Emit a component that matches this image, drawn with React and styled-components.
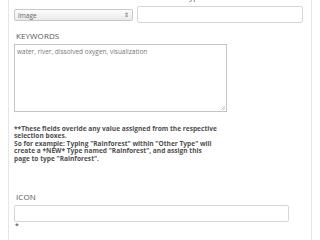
import React from 'react';
import styled, { createGlobalStyle } from 'styled-components';

const Global = createGlobalStyle`
  html, body {
    margin: 0;
    padding: 0;
    background: #fff;
    overflow: hidden;
  }
  body {
    font-family: "Open Sans", "DejaVu Sans", sans-serif;
  }
`;

const Panel = styled.div`
  margin: -8px 8px 0 8px;
  height: 260px;
  border-left: 1px solid #e6e6e6;
  border-right: 1px solid #e6e6e6;
  padding: 0 5px;
  box-sizing: border-box;
`;

const Row = styled.div`
  display: flex;
  gap: 4px;
  align-items: flex-start;
`;

const Field = styled.div`
  display: flex;
  flex-direction: column;
  width: ${p => p.w}px;
`;

const Label = styled.div`
  font-size: 8px;
  line-height: 10px;
  color: #555;
  padding-left: 2px;
  text-transform: ${p => (p.upper ? 'uppercase' : 'none')};
  letter-spacing: 0.1px;
`;

const Select = styled.div`
  margin-top: 7px;
  height: 10px;
  border: 1px solid #c8c8c8;
  border-radius: 2px;
  background: linear-gradient(#fdfdfd, #e9e9e9);
  display: flex;
  align-items: center;
  justify-content: space-between;
  padding: 0 3px;
  font-size: 6.5px;
  color: #666;
`;

const Arrows = styled.span`
  font-size: 6px;
  color: #666;
  line-height: 1;
`;

const TextInput = styled.div`
  width: ${p => (p.w ? `${p.w}px` : 'auto')};
  height: 17px;
  margin-top: ${p => p.mt}px;
  border: 1px solid #d6d6d6;
  border-radius: 2px;
  background: #fff;
  box-sizing: border-box;
`;

const Gap = styled.div`
  height: ${p => p.h}px;
`;

const TextArea = styled.div`
  position: relative;
  width: 213px;
  height: 68px;
  margin-top: 3px;
  border: 1px solid #c4c4c4;
  box-sizing: border-box;
  padding: 2px 2px;
  font-size: 6.5px;
  color: #777;
`;

const Grip = styled.svg`
  position: absolute;
  right: 1px;
  bottom: 1px;
`;

const Note = styled.p`
  margin: 13px 0 0 0;
  width: 204px;
  font-size: 6.6px;
  line-height: 7.4px;
  font-weight: 700;
  color: #4f4f4f;
`;

const IconBlock = styled.div`
  margin-top: 30px;
`;

const Star = styled.div`
  font-size: 7px;
  color: #333;
  padding-left: 1px;
  line-height: 8px;
`;

export default function App() {
  return (
    <>
      <Global />
      <Panel>
        <Row>
          <Field w={119}>
            <Label upper>Subtype</Label>
            <Select>
              <span>Image</span>
              <Arrows>⇕</Arrows>
            </Select>
          </Field>
          <Field w={166}>
            <Label>OR New Subtype</Label>
            <TextInput mt={4} />
          </Field>
        </Row>
        <Gap h={8} />
        <Label upper>Keywords</Label>
        <TextArea>
          water, river, dissolved oxygen, visualization
          <Grip width="5" height="5" viewBox="0 0 5 5">
            <path d="M5 1 L1 5 M5 3 L3 5" stroke="#aaa" strokeWidth="0.7" />
          </Grip>
        </TextArea>
        <Note>
          **These fields overide any value assigned from the respective selection boxes.
          <br />
          So for example: Typing "Rainforest" within "Other Type" will create a *NEW* Type named
          "Rainforest", and assign this page to type "Rainforest".
        </Note>
        <IconBlock>
          <Label upper>Icon</Label>
          <TextInput w={275} mt={3} />
          <Star>*</Star>
        </IconBlock>
      </Panel>
    </>
  );
}
